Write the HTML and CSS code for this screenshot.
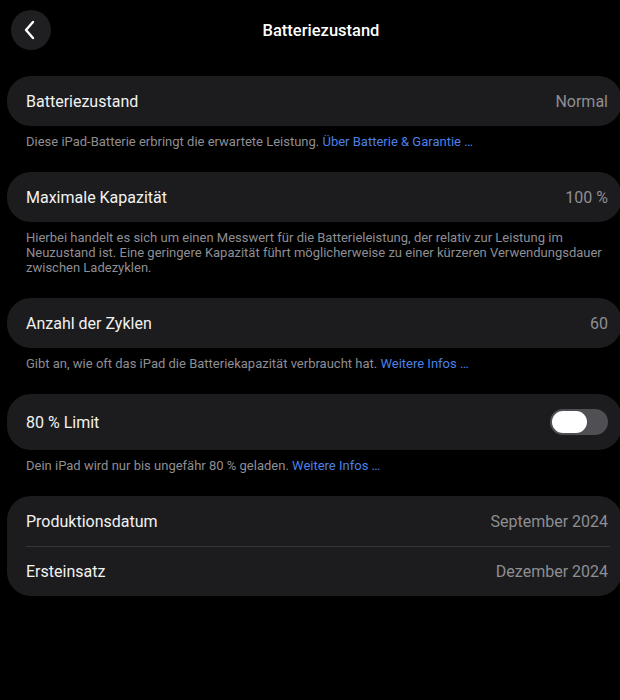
FILE: index.html
```html
<!DOCTYPE html>
<html lang="de">
<head>
<meta charset="UTF-8" />
<meta name="viewport" content="width=device-width, initial-scale=1" />
<title>Batteriezustand</title>
<link rel="stylesheet" href="styles.css">
</head>
<body>

<!-- Top bar -->
<div class="topBar">
  <button class="backBtn" title="Zurück">
    <svg width="14" height="20" viewBox="0 0 14 20">
      <path d="M10 2 L3 10 L10 18" fill="none" stroke="#fff" stroke-width="2.4" stroke-linecap="round" stroke-linejoin="round"/>
    </svg>
  </button>
  <div class="pageTitle">Batteriezustand</div>
</div>

<div class="settings">

  <div class="group">
    <div class="row">
      <span class="label">Batteriezustand</span>
      <span class="value">Normal</span>
    </div>
  </div>
  <div class="footnote">Diese iPad-Batterie erbringt die erwartete Leistung. <a href="#">Über Batterie &amp; Garantie …</a></div>

  <div class="group">
    <div class="row">
      <span class="label">Maximale Kapazität</span>
      <span class="value">100 %</span>
    </div>
  </div>
  <div class="footnote">Hierbei handelt es sich um einen Messwert für die Batterieleistung, der relativ zur Leistung im<br>Neuzustand ist. Eine geringere Kapazität führt möglicherweise zu einer kürzeren Verwendungsdauer<br>zwischen Ladezyklen.</div>

  <div class="group">
    <div class="row">
      <span class="label">Anzahl der Zyklen</span>
      <span class="value">60</span>
    </div>
  </div>
  <div class="footnote">Gibt an, wie oft das iPad die Batteriekapazität verbraucht hat. <a href="#">Weitere Infos …</a></div>

  <div class="group">
    <div class="row toggleRow">
      <span class="label">80 % Limit</span>
      <span class="switch"><span class="knob"></span></span>
    </div>
  </div>
  <div class="footnote">Dein iPad wird nur bis ungefähr 80 % geladen. <a href="#">Weitere Infos …</a></div>

  <div class="group">
    <div class="row">
      <span class="label">Produktionsdatum</span>
      <span class="value">September 2024</span>
    </div>
    <div class="row">
      <span class="label">Ersteinsatz</span>
      <span class="value">Dezember 2024</span>
    </div>
  </div>

</div>

</body>
</html>
```

FILE: styles.css
```css
body {
  margin: 0;
  background: #000;
  color: #fff;
  font-family: Roboto, "Liberation Sans", sans-serif;
  overflow: hidden;
}

/* Top bar with back button and title */
.topBar {
  position: relative;
  height: 60px;
  display: flex;
  align-items: center;
  justify-content: center;
}
.backBtn {
  position: absolute;
  left: 11px;
  top: 10px;
  width: 40px;
  height: 40px;
  border-radius: 50%;
  border: none;
  background: #1f1f21;
  display: flex;
  align-items: center;
  justify-content: center;
  padding: 0 2px 0 0;
}
.pageTitle {
  font-size: 16.5px;
  font-weight: 500;
  margin-left: 22px;
}

/* Settings list */
.settings {
  margin: 16px -2px 0 7px;
}
.group {
  background: #1c1c1e;
  border-radius: 24px;
}
.row {
  height: 50px;
  display: flex;
  align-items: center;
  justify-content: space-between;
  padding: 0 14px 0 19px;
  font-size: 16px;
  color: #f2f2f2;
}
.row + .row {
  border-top: 1px solid #363638;
  margin-left: 19px;
  padding-left: 0;
  margin-right: 12px;
  padding-right: 2px;
  height: 49px;
}
.toggleRow {
  height: 56px;
}
.value {
  color: #8e8e93;
}

/* Text under each group */
.footnote {
  padding: 7.5px 0 23.5px 19px;
  font-size: 13px;
  line-height: 15px;
  color: #8e8e93;
  white-space: nowrap;
}
.footnote a {
  color: #4c80e6;
  text-decoration: none;
}

/* Toggle switch, off state */
.switch {
  width: 58px;
  height: 26px;
  border-radius: 13px;
  background: #505054;
  position: relative;
}
.knob {
  position: absolute;
  left: 2px;
  top: 2px;
  width: 35px;
  height: 22px;
  border-radius: 11px;
  background: #fff;
}
```
